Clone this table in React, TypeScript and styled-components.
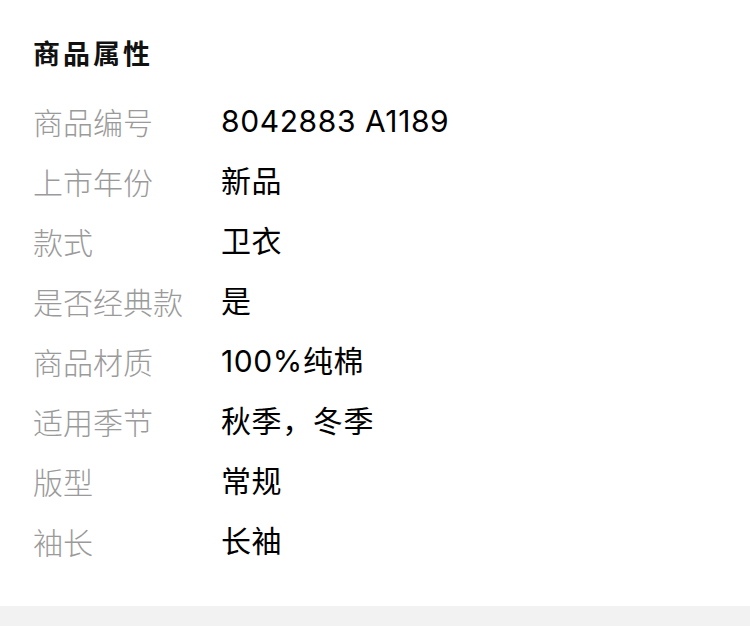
import React from 'react'
import styled, { createGlobalStyle } from 'styled-components'

const GlobalStyle = createGlobalStyle`
  html, body {
    margin: 0;
    padding: 0;
    background: #fff;
  }
  body {
    font-family: "Noto Sans CJK SC", "Noto Sans", sans-serif;
  }
`

type Attr = { label: string; value: string }

const attrs: Attr[] = [
  { label: '商品编号', value: '8042883 A1189' },
  { label: '上市年份', value: '新品' },
  { label: '款式', value: '卫衣' },
  { label: '是否经典款', value: '是' },
  { label: '商品材质', value: '100%纯棉' },
  { label: '适用季节', value: '秋季，冬季' },
  { label: '版型', value: '常规' },
  { label: '袖长', value: '长袖' },
]

const Section = styled.section`
  padding: 33px 33px 35px;
  background: #fff;
`

const Title = styled.h2`
  margin: 0;
  height: 40px;
  line-height: 40px;
  font-size: 27px;
  font-weight: 700;
  letter-spacing: 3px;
  color: #111;
`

const List = styled.dl`
  margin: 18px 0 0;
  display: grid;
  grid-template-columns: 188px 1fr;
  grid-auto-rows: 60px;
  align-items: center;
`

const Label = styled.dt`
  margin: 0;
  font-size: 30px;
  line-height: 60px;
  color: #9a9a9a;
  font-weight: 300;
  white-space: nowrap;
`

const Value = styled.dd`
  margin: 0;
  font-family: Inter, "Noto Sans CJK SC", sans-serif;
  font-size: 30px;
  letter-spacing: 0.6px;
  line-height: 60px;
  color: #000;
  font-weight: 400;
  white-space: nowrap;
`

const Divider = styled.div`
  height: 20px;
  background: #f2f2f2;
`

const Spacer = styled.div`
  height: 14px;
  background: #fff;
`

const App: React.FC = () => (
  <>
    <GlobalStyle />
    <Section>
      <Title>商品属性</Title>
      <List>
        {attrs.map(a => (
          <React.Fragment key={a.label}>
            <Label>{a.label}</Label>
            <Value>{a.value}</Value>
          </React.Fragment>
        ))}
      </List>
    </Section>
    <Divider />
    <Spacer />
  </>
)

export default App
